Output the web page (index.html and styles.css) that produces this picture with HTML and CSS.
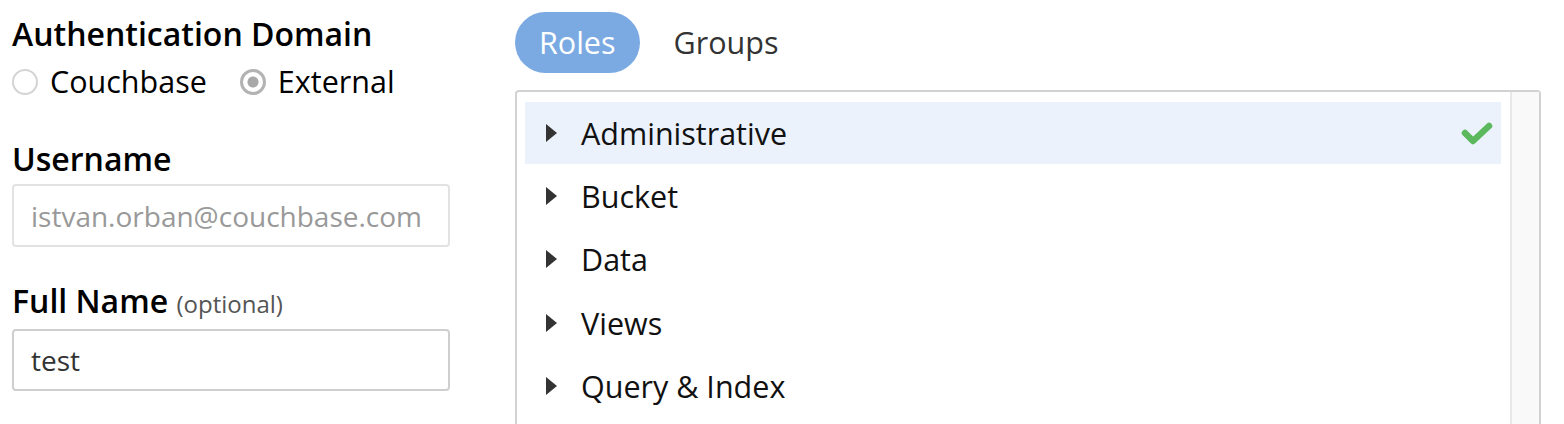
FILE: index.html
```html
<!DOCTYPE html>
<html lang="en">
<head>
    <meta charset="UTF-8">
    <title>Edit User</title>
    <link rel="stylesheet" href="styles.css">
</head>
<body>
    <div class="page">
        <div class="user-form">
            <div class="field">
                <label class="field-label">Authentication Domain</label>
                <div class="radio-group">
                    <span class="radio"><span class="radio-dot"></span>Couchbase</span>
                    <span class="radio checked"><span class="radio-dot"></span>External</span>
                </div>
            </div>

            <div class="field">
                <label class="field-label" for="username">Username</label>
                <input type="text" id="username" class="text-input disabled" placeholder="istvan.orban@couchbase.com">
            </div>

            <div class="field">
                <label class="field-label" for="fullname">Full Name <small>(optional)</small></label>
                <input type="text" id="fullname" class="text-input" value="test">
            </div>
        </div>

        <div class="roles-panel">
            <nav class="tabs">
                <span class="tab active">Roles</span>
                <span class="tab">Groups</span>
            </nav>

            <div class="roles-box">
                <ul class="role-list">
                    <li class="role selected">
                        <span class="caret"></span>
                        <span class="role-name">Administrative</span>
                        <svg class="check" width="32" height="24" viewBox="0 0 32 24">
                            <polyline points="4,12 12,20 28,5" fill="none" stroke="#5cb85c" stroke-width="6.5" stroke-linecap="round" stroke-linejoin="round"/>
                        </svg>
                    </li>
                    <li class="role"><span class="caret"></span><span class="role-name">Bucket</span></li>
                    <li class="role"><span class="caret"></span><span class="role-name">Data</span></li>
                    <li class="role"><span class="caret"></span><span class="role-name">Views</span></li>
                    <li class="role"><span class="caret"></span><span class="role-name">Query &amp; Index</span></li>
                </ul>
                <div class="scroll-track"></div>
            </div>
        </div>
    </div>
</body>
</html>
```

FILE: styles.css
```css
* {
    margin: 0;
    padding: 0;
    box-sizing: border-box;
}

html, body {
    height: 100%;
    overflow: hidden;
}

body {
    font-family: "Open Sans", "Liberation Sans", sans-serif;
    font-size: 30.5px;
    line-height: 38px;
    color: #000;
    background: #fff;
}

.page {
    display: flex;
    padding-left: 12px;
}

.user-form {
    width: 438px;
    padding-top: 15px;
}

.field {
    margin-bottom: 35px;
}

.field-label {
    display: block;
    font-size: 32px;
    font-weight: 600;
    margin-bottom: 6px;
}

.field-label small {
    font-size: 24px;
    font-weight: 400;
    color: #555;
}

.radio-group {
    display: flex;
    gap: 33px;
    margin-top: 9px;
    margin-bottom: 40px;
}

.radio {
    display: flex;
    align-items: center;
}

.radio-dot {
    width: 26px;
    height: 26px;
    border: 2px solid #d4d4d4;
    border-radius: 50%;
    margin-right: 12px;
    margin-top: 2px;
}

.radio.checked .radio-dot {
    border: 3px solid #b3b3b3;
    background: radial-gradient(circle, #a8a8a8 0 5px, #fff 6px);
}

.text-input {
    display: block;
    width: 100%;
    height: 62px;
    padding: 0 17px;
    font-family: inherit;
    font-size: 28px;
    color: #333;
    border: 2px solid #cfcfcf;
    border-radius: 4px;
    outline: none;
}

.text-input.disabled {
    height: 63px;
    border-color: #e2e2e2;
}

.text-input::placeholder {
    color: #999;
}

.roles-panel {
    flex: 1;
    margin-left: 65px;
    margin-right: 23px;
    padding-top: 12px;
}

.tabs {
    display: flex;
    gap: 10px;
    margin-bottom: 17px;
}

.tab {
    height: 61px;
    line-height: 61px;
    padding: 0 24px;
    border-radius: 31px;
    color: #333;
}

.tab.active {
    background-color: #7baae3;
    color: #fff;
}

.roles-box {
    display: flex;
    height: 400px;
    border: 2px solid #d2d2d2;
    border-radius: 4px;
}

.role-list {
    list-style: none;
    flex: 1;
    padding: 10px 9px 0 8px;
}

.role {
    display: flex;
    align-items: center;
    height: 63.5px;
    padding-left: 21px;
    padding-right: 8px;
    color: #111;
}

.role.selected {
    height: 62px;
    background-color: #ebf2fb;
}

.caret {
    width: 0;
    height: 0;
    border-top: 9.5px solid transparent;
    border-bottom: 9.5px solid transparent;
    border-left: 11.5px solid #333;
    margin-right: 24px;
}

.role-name {
    flex: 1;
}

.check {
    display: block;
}

.scroll-track {
    width: 29px;
    background-color: #f9f9f9;
    border-left: 2px solid #e8e8e8;
}
```
